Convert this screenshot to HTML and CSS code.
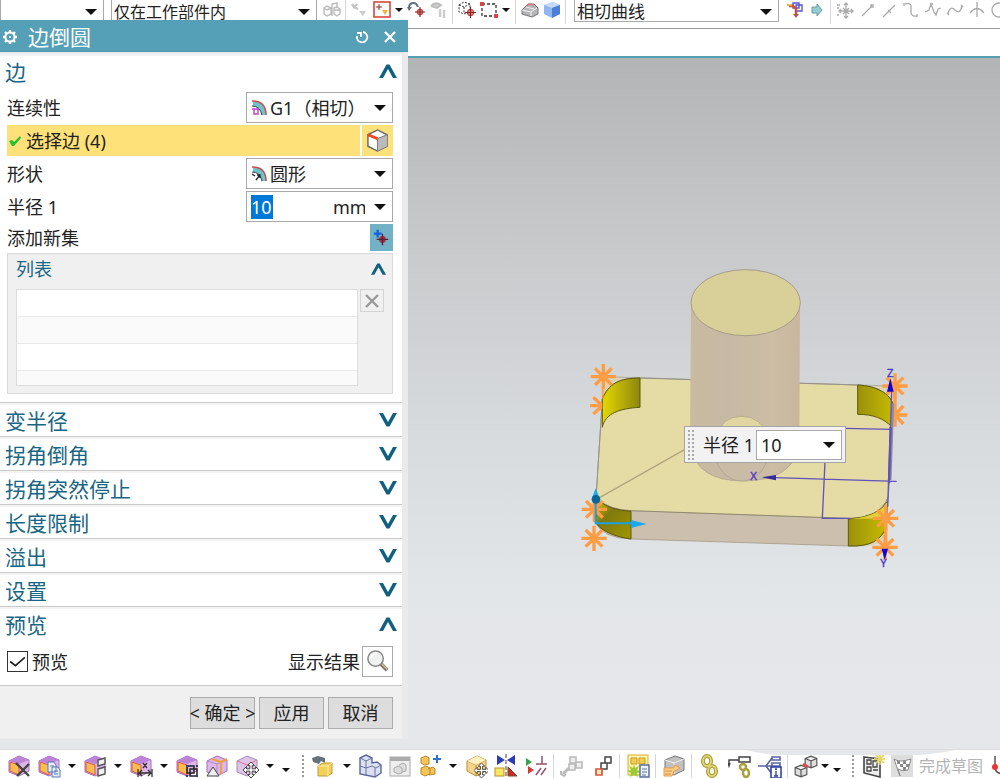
FILE: index.html
```html
<!DOCTYPE html>
<html lang="zh-CN">
<head>
<meta charset="utf-8">
<title>边倒圆</title>
<link rel="stylesheet" href="styles.css">
</head>
<body>
<svg class="defs" aria-hidden="true">
  <defs>
    <symbol id="down" viewBox="0 0 12 6"><path d="M0 0H12L6 6Z" fill="#111"/></symbol>
    <symbol id="chev" viewBox="0 0 18 14"><path d="M0 0H4L9 9L14 0H18L10.5 13.5H7.5Z" fill="#11607f"/></symbol>
    <symbol id="pcube" viewBox="0 0 24 24">
      <path d="M2 7L12 2L22 6V17L12 22L2 18Z" fill="#dcb6e8" stroke="#a66fc0"/>
      <path d="M2 7L12 2L22 6L12 10Z" fill="#bd83d8"/>
      <path d="M3 8L12 11V21L3 17Z" fill="#fbbd4d" stroke="#d9574e"/>
    </symbol>
    <symbol id="ycube" viewBox="0 0 24 24">
      <path d="M3 7L13 2L22 6V17L12 22L3 17Z" fill="#f4d489" stroke="#b98f34"/>
      <path d="M3 7L12 11L22 6M12 11V22" fill="none" stroke="#b98f34"/>
      <path d="M3 7L13 2L22 6L12 11Z" fill="#fff0bf"/>
    </symbol>
    <symbol id="move" viewBox="0 0 14 14"><path d="M7 0L10 3H8V6H11V4L14 7L11 10V8H8V11H10L7 14L4 11H6V8H3V10L0 7L3 4V6H6V3H4Z" fill="#fff" stroke="#333" stroke-width=".8"/></symbol>
    <symbol id="target" viewBox="0 0 12 12"><circle cx="6" cy="6" r="3.5" fill="#e88" stroke="#b22"/><path d="M6 0V12M0 6H12" stroke="#822" stroke-width="1.3"/></symbol>
    <symbol id="gcube" viewBox="0 0 12 12"><path d="M1 3L6 1L11 3V9L6 11L1 9ZM1 3L6 5L11 3M6 5V11" fill="#dedede" stroke="#555"/></symbol>
    <g id="star"><path d="M0-38V38M-38 0H38M-25-25L25 25M-25 25L25-25" stroke="#ff9d45" stroke-width="10"/></g>
    <linearGradient id="bright"><stop offset="0" stop-color="#e5d800"/><stop offset="1" stop-color="#8d850f"/></linearGradient>
    <linearGradient id="dark"><stop offset="0" stop-color="#9a910c"/><stop offset="1" stop-color="#c6bb00"/></linearGradient>
    <linearGradient id="low" x1="0" y1="0" x2="1" y2="1"><stop offset="0" stop-color="#d3c800"/><stop offset=".35" stop-color="#7f780f"/><stop offset="1" stop-color="#a19700"/></linearGradient>
    <linearGradient id="cyl"><stop offset="0" stop-color="#c9bba0"/><stop offset=".35" stop-color="#c6b8a4"/><stop offset=".75" stop-color="#cdbda5"/><stop offset="1" stop-color="#c8b79e"/></linearGradient>
  </defs>
</svg>

<div class="app">
  <header class="topbar">
    <span class="combo combo-first"><select aria-label="类型过滤器"><option></option></select><svg class="arrow"><use href="#down"/></svg></span>
    <span class="combo combo-scope"><select aria-label="选择范围"><option>仅在工作部件内</option></select><svg class="arrow"><use href="#down"/></svg></span>
    <svg class="tool" viewBox="0 0 20 20"><g fill="none" stroke="#bbb" stroke-width="1.4"><path d="M2 8L5 6L9 8V14L5 16L2 14ZM2 8L5 10L9 8M10 4V16M10 4L15 3V8M12 8L15 7L18 9V14L15 16L12 14ZM12 10H18"/></g></svg>
    <i class="sep"></i>
    <svg class="tool" viewBox="0 0 20 20"><path d="M2 4L4 7L7 4M4 7L8 9" fill="none" stroke="#c4c4c4" stroke-width="2.4"/><path d="M9 11H16L13 16Z" fill="#ccc"/></svg>
    <svg class="tool" viewBox="0 0 20 20"><rect x="2" y="2" width="16" height="15" fill="#fff" stroke="#d9453f" stroke-width="1.6"/><path d="M7 4V10M4 7H10" stroke="#555"/><circle cx="7" cy="7" r="1.5" fill="#c55"/><path d="M10 10H16L13 15Z" fill="#f3b43b"/></svg>
    <svg class="drop"><use href="#down"/></svg>
    <svg class="tool" viewBox="0 0 20 20"><path d="M2 8C2 2 9 1 11 7" fill="none" stroke="#666d80" stroke-width="2"/><path d="M0 7L5 7L2 11Z" fill="#666d80"/><use href="#target" x="8" y="7" width="10" height="10"/></svg>
    <svg class="tool" viewBox="0 0 20 20"><path d="M2 6Q6 1 12 5L8 8L2 6" fill="#ccc" stroke="#bdbdbd" stroke-width="2"/><path d="M11 9V17M15 10V18" stroke="#ccc" stroke-width="2.4"/></svg>
    <i class="sep"></i>
    <svg class="tool" viewBox="0 0 20 20"><path d="M2 5L7 2L13 4V11L7 14L2 12ZM2 5L7 7L13 4M7 7V13" fill="none" stroke="#333" stroke-dasharray="2 1.4"/><use href="#target" x="8" y="7" width="11" height="11"/></svg>
    <svg class="tool" viewBox="0 0 20 20"><rect x="3" y="4" width="14" height="12" fill="none" stroke="#333" stroke-width="1.3" stroke-dasharray="3 2"/><path d="M1 2H5V6H1ZM15 14H19V18H15Z" fill="#d44"/></svg>
    <svg class="drop"><use href="#down"/></svg>
    <i class="sep"></i>
    <svg class="tool" viewBox="0 0 20 20"><path d="M2 10L8 4H14L18 8V14L12 17L2 14Z" fill="#b5b5b7" stroke="#777"/><path d="M2 10L11 12L17 8M11 12V16M6 7L14 9" stroke="#f2f2f2" fill="none"/><path d="M7 6L9 4L14 5" stroke="#d77" fill="none" stroke-width="1.5"/></svg>
    <svg class="tool" viewBox="0 0 20 20"><path d="M2 5L11 2L18 5V14L10 18L2 14Z" fill="#8fb5f2"/><path d="M2 5L11 2L18 5L10 8Z" fill="#c5dafa"/><path d="M10 8L18 5V14L10 18Z" fill="#4e7fd6"/></svg>
    <i class="sep"></i>
    <span class="combo combo-curve"><select aria-label="曲线规则"><option>相切曲线</option></select><svg class="arrow"><use href="#down"/></svg></span>
    <svg class="tool" viewBox="0 0 20 20"><path d="M8 3H14V8H8ZM11 5H17V11H11Z" fill="none" stroke="#5156d3" stroke-width="1.4"/><path d="M4 6H8L11 9V15" fill="none" stroke="#d14c3b" stroke-width="2.4"/><path d="M2 5H7" stroke="#f0b544" stroke-width="2"/><path d="M8 14H14L11 18Z" fill="#a55"/></svg>
    <svg class="tool" viewBox="0 0 20 20"><path d="M5 7H10V4L15 10L10 16V13H5Z" fill="#96cdd5" stroke="#6e9aa5"/></svg>
    <i class="sep"></i>
    <svg class="tool gray" viewBox="0 0 20 20"><path d="M11 3V18M4 11H18M9 5L11 3L13 5M9 16L11 18L13 16M6 9L4 11L6 13M16 9L18 11L16 13M8 8L14 14M14 8L8 14"/><path d="M2 5H5M2 8H4M2 15H4"/></svg>
    <svg class="tool gray" viewBox="0 0 20 20"><path d="M5 16L15 6M14 5H16V7H14Z"/></svg>
    <svg class="tool gray" viewBox="0 0 20 20"><path d="M4 17L16 5M9 10L12 13"/></svg>
    <svg class="tool gray" viewBox="0 0 20 20"><path d="M4 4Q11 2 10 8V12Q10 17 16 16M3 3V6M16 14V17"/></svg>
    <svg class="tool gray" viewBox="0 0 20 20"><path d="M2 12L6 10L8 4L11 12L13 15L15 9L18 8M7 4H10M12 14H14"/></svg>
    <svg class="tool gray" viewBox="0 0 20 20"><path d="M3 14Q5 5 10 10T17 6M2 13L4 15M16 5L18 7"/></svg>
    <svg class="tool gray" viewBox="0 0 20 20"><path d="M10 2V17M3 13Q10 4 17 13"/></svg>
    <svg class="tool gray" viewBox="0 0 20 20"><circle cx="10" cy="10" r="7"/></svg>
  </header>
  <div class="strip"></div>

  <main class="canvas">
    <div class="scene">
      <svg class="model" viewBox="0 0 1050 960">
        <path d="M100 350L863 375L970 380V440L955 715L950 835Q920 866 835 858L183 837Q100 838 72 785L78 715L97 418Z" fill="#ddd3b5"/>
        <path d="M78 715Q120 750 183 752L835 775Q930 772 955 710L948 800Q930 862 835 858L183 837Q100 835 75 785Z" fill="#cdbfae" stroke="#9b9180" stroke-width="2"/>
        <path d="M97 418C115 370 150 354 210 354L863 375C920 378 960 400 970 435L955 710Q930 775 835 775L183 752Q120 750 78 715Z" fill="#e5dba5" stroke="#918970" stroke-width="3"/>
        <path d="M100 350L363 358M690 370L970 378M97 418L78 715" stroke="#999" stroke-width="2"/>
        <g stroke="#5d590e" stroke-width="3">
          <path d="M97 418C115 370 150 354 210 354V442C150 445 105 460 97 502Z" fill="url(#bright)"/>
          <path d="M863 375C920 378 960 400 970 435L965 500C940 475 910 463 863 463Z" fill="url(#dark)"/>
          <path d="M90 725Q120 750 183 754V837C130 830 90 810 75 785Z" fill="url(#low)"/>
          <path d="M835 777Q925 772 952 725L948 800Q930 862 835 858Z" fill="url(#dark)"/>
        </g>
        <path d="M835 777Q925 772 952 725L948 775Z" fill="#e4cf35"/>
        <path d="M363 130L360 560Q380 663 520 663Q665 663 688 560L690 130Z" fill="url(#cyl)"/>
        <path d="M363 560Q380 663 520 663Q665 663 688 560" fill="none" stroke="#aaa08e" stroke-width="2"/>
        <ellipse cx="515" cy="566" rx="82" ry="97" fill="#c9bba5" stroke="#a99e88" stroke-width="2"/>
        <path d="M438 530Q455 469 515 469T592 530Z" fill="#e1d5a1" stroke="#aaa080" stroke-width="2"/>
        <ellipse cx="527" cy="128" rx="164" ry="99" fill="#d9cf98" stroke="#a69d8b" stroke-width="3"/>
        <path d="M90 712L345 568" stroke="#b3a47d" stroke-width="4"/>
        <g>
          <use href="#star" x="100" y="350"/><path d="M60 437H97M70 412L94 434M70 462L94 440" stroke="#ff9d45" stroke-width="10"/><path d="M98 380V415" stroke="#ff9d45" stroke-width="5"/>
          <use href="#star" x="975" y="378"/><path d="M975 380V500M975 465H1012M975 465L1000 438M975 465L1000 492" stroke="#ff9d45" stroke-width="10"/>
          <use href="#star" x="73" y="748"/><use href="#star" x="72" y="835"/>
          <use href="#star" x="947" y="775"/><use href="#star" x="945" y="862"/><path d="M947 775V862" stroke="#ff9d45" stroke-width="10"/>
        </g>
        <path d="M968 430L960 660" stroke="#8f8aa0" stroke-width="9"/>
        <g fill="none" stroke="#6253ba" stroke-width="4">
          <path d="M825 505L965 508M765 605L757 775H840M590 652L980 664M965 395L953 740"/>
          <path d="M962 500L957 670" stroke-width="7"/>
        </g>
        <path d="M575 652L618 645V661Z" fill="#352c99"/>
        <path d="M961 355L971 395H951ZM944 900L935 866H954Z" fill="#1200d8"/>
        <g class="axis"><text x="541" y="661">X</text><text x="951" y="350">Z</text><text x="931" y="920">Y</text></g>
        <path d="M77 710V790H190" fill="none" stroke="#1aa0e0" stroke-width="6"/>
        <path d="M77 685L90 718H65ZM230 792L183 780V804Z" fill="#1aa8ee"/><circle cx="78" cy="718" r="13" fill="#08669b"/>
      </svg>
      <div class="floatbox">
        <i class="grip"></i>
        <label for="float-radius">半径 1</label>
        <span class="combo combo-float"><select id="float-radius"><option>10</option></select><svg class="arrow"><use href="#down"/></svg></span>
      </div>
    </div>
  </main>

  <footer class="bottombar">
    <svg class="ic" viewBox="0 0 24 24"><use href="#pcube"/><path d="M9 9L22 22M22 10L10 22" stroke="#444" stroke-width="2.4"/></svg>
    <svg class="ic" viewBox="0 0 24 24"><use href="#pcube"/><path d="M11 8H17L19 11V18H11ZM15 13H21L23 16V23H15Z" fill="#e8effc" stroke="#587bb8"/><path d="M13 12H17M17 17H21M17 20H21" stroke="#587bb8"/></svg>
    <svg class="drop"><use href="#down"/></svg>
    <svg class="ic" viewBox="0 0 24 24"><use href="#pcube"/><path d="M15 6L22 4V10L15 12ZM15 15L22 13V20L15 22Z" fill="#f1f1f1" stroke="#555" stroke-width="1.4"/></svg>
    <svg class="drop"><use href="#down"/></svg>
    <svg class="ic" viewBox="0 0 24 24"><use href="#pcube"/><path d="M9 15V23M23 15V23M10 19H22M13 16L10 19L13 22M19 16L22 19L19 22M14 9L18 14M18 9L14 14" stroke="#333" fill="none" stroke-width="1.3"/></svg>
    <svg class="drop"><use href="#down"/></svg>
    <svg class="ic" viewBox="0 0 24 24"><use href="#pcube"/><path d="M12 12H19V19H12ZM15 15H22V22H15Z" fill="none" stroke="#222" stroke-width="1.5"/><path d="M11 11H13V13H11ZM21 11H23V13H21ZM11 21H13V23H11ZM21 21H23V23H21Z" fill="#2d38a8"/></svg>
    <svg class="ic" viewBox="0 0 24 24"><path d="M2 7L12 2L22 6V17L12 22L2 18Z" fill="#dcb6e8" stroke="#a66fc0"/><path d="M2 7L12 10V20M12 10L22 6" fill="none" stroke="#b98acb"/><path d="M7 5L16 8V20M16 8L22 5" fill="none" stroke="#efa03d" stroke-width="2"/><path d="M2 22L8 13L14 22Z" fill="#eee" stroke="#444"/></svg>
    <svg class="ic" viewBox="0 0 24 24"><path d="M2 7L12 2L22 6V17L12 22L2 18Z" fill="#ddc3e5" stroke="#a98bb5"/><path d="M2 7L12 11L22 6" fill="none" stroke="#db7893"/><use href="#move" x="8" y="8" width="16" height="16"/></svg>
    <svg class="drop"><use href="#down"/></svg>
    <svg class="drop drop-low"><use href="#down"/></svg>
    <i class="dots"></i>
    <svg class="ic" viewBox="0 0 24 24"><path d="M0 4L6 2L13 4V9L9 7L7 10L1 8Z" fill="#65717d"/><path d="M6 12L11 9H20V19L16 22H6Z" fill="#f2d158" stroke="#c39b36"/><path d="M6 12H16L20 9M16 12V22" fill="none" stroke="#fff0a5"/></svg>
    <svg class="drop"><use href="#down"/></svg>
    <svg class="ic" viewBox="0 0 24 24"><path d="M2 4L8 1L14 4V9L19 8L23 11V19L17 23L2 20Z" fill="#dce1f1" stroke="#5966a0" stroke-width="1.4"/><path d="M2 4L8 7L14 4M8 7V21M2 12L8 14L14 12L18 14L23 11M17 14V22" fill="none" stroke="#68739f"/></svg>
    <svg class="ic" viewBox="0 0 24 24"><rect x="2" y="3" width="20" height="19" fill="#eee" stroke="#aaa"/><path d="M2 5H22" stroke="#aaa" stroke-width="4"/><path d="M6 14L10 12L14 14V19L10 20L6 18ZM11 11L15 9L18 11V17L14 18" fill="#ddd" stroke="#aaa"/></svg>
    <svg class="ic" viewBox="0 0 24 24"><path d="M3 4L8 2L11 4V10L6 11L3 9ZM3 14L8 12L12 14V20L7 22L3 20ZM10 15L15 13L17 15V20L11 21" fill="#f5c458" stroke="#b9882f"/><path d="M19 1V9M15 5H23" stroke="#2f72d5" stroke-width="2"/></svg>
    <svg class="drop"><use href="#down"/></svg>
    <svg class="ic" viewBox="0 0 24 24"><use href="#ycube"/><use href="#move" x="10" y="9" width="15" height="15"/></svg>
    <svg class="ic" viewBox="0 0 24 24"><path d="M3 1L11 6L3 11ZM21 1L13 6L21 11Z" fill="#2d3cb6"/><path d="M12 0V24" stroke="#444" stroke-dasharray="4 2"/><rect x="1" y="14" width="9" height="8" fill="#f8e663" stroke="#b99124"/><path d="M14 13L23 22H14Z" fill="#c92b2b" stroke="#842"/></svg>
    <svg class="ic" viewBox="0 0 24 24"><path d="M2 4L8 8L2 12Z" fill="#37a254"/><path d="M4 12L10 16L4 20Z" fill="#d63d30"/><path d="M18 2V10M12 10H23M12 21L17 14M17 21L22 14" stroke="#96506f" stroke-width="1.5"/></svg>
    <i class="sep"></i>
    <svg class="ic" viewBox="0 0 24 24"><path d="M10 3H16V9H10ZM16 8H22V14H16ZM9 10H15V16H9Z" fill="#eee" stroke="#bbb" stroke-width="1.6"/><path d="M3 20L9 14" stroke="#bbb" stroke-width="3"/><path d="M1 17L1 20L4 22L6 20" fill="none" stroke="#bbb" stroke-width="2"/></svg>
    <svg class="ic" viewBox="0 0 24 24"><path d="M15 3H21V9H15ZM11 9H17V15H11Z" fill="#fff" stroke="#444" stroke-width="1.5"/><path d="M6 15H12V21H6Z" fill="#ffe5bd" stroke="#d4583a" stroke-width="1.7"/></svg>
    <i class="sep"></i>
    <svg class="ic" viewBox="0 0 24 24"><rect x="2" y="1" width="20" height="20" fill="#fff4b1" stroke="#d4b02d"/><path d="M5 4H11V10H5ZM13 4H19V10H13Z" fill="#f4cd50" stroke="#c59b22"/><path d="M8 10L9 14L13 12L11 16L15 18L11 19L12 23L8 21L4 23L5 19L1 17L5 16L3 12L7 14Z" fill="#9acb34"/><path d="M14 11H23V23H14Z" fill="#eef3ff" stroke="#5670a2" stroke-width="1.5"/><path d="M16 15H21M16 18H21M16 21H20" stroke="#5670a2"/></svg>
    <i class="sep"></i>
    <svg class="ic" viewBox="0 0 24 24"><path d="M3 6L13 2L22 5V16L12 21L3 17Z" fill="#c1c1c1" stroke="#777"/><path d="M3 6L12 9L22 5M12 9V20" stroke="#eee" fill="none"/><path d="M2 14H12V11L17 13V15L12 17L10 22H2Z" fill="#ffd18a" stroke="#e59a46"/><path d="M3 17H10M3 20H9" stroke="#d98e3d"/></svg>
    <i class="sep"></i>
    <svg class="ic" viewBox="0 0 24 24"><g fill="none" stroke="#a79b31" stroke-width="4"><ellipse cx="9" cy="7" rx="4" ry="5"/><ellipse cx="14" cy="17" rx="4" ry="5"/></g><g fill="none" stroke="#dfd276" stroke-width="2"><ellipse cx="9" cy="7" rx="4" ry="5"/><ellipse cx="14" cy="17" rx="4" ry="5"/></g></svg>
    <svg class="ic" viewBox="0 0 24 24"><path d="M1 11V6H11M2 9L1 12L0 9M11 3H22V8H11Z" fill="none" stroke="#444" stroke-width="1.5"/><g fill="none" stroke="#aa9f3d" stroke-width="2.4"><ellipse cx="15" cy="13" rx="3" ry="3"/><ellipse cx="18" cy="19" rx="3" ry="4"/></g></svg>
    <svg class="ic" viewBox="0 0 24 24"><path d="M0 12H8M8 12L14 4M8 12L14 20M8 12H14M14 3H22V6H14ZM14 9H22V12H14Z" fill="none" stroke="#5965a0" stroke-width="1.6"/><rect x="13" y="13" width="10" height="11" fill="#fff" stroke="#2839a7" stroke-width="1.5"/><path d="M18 17V22M16 22H20M17 15H19" stroke="#2839a7" stroke-width="1.3"/></svg>
    <i class="sep"></i>
    <div class="tail">
      <svg class="ic" viewBox="0 0 24 24"><use href="#gcube" x="0" y="10" width="14" height="14"/><use href="#gcube" x="10" y="1" width="14" height="14"/><path d="M9 10L14 13" stroke="#d44f4f" stroke-width="3"/></svg>
      <svg class="drop"><use href="#down"/></svg>
      <svg class="drop drop-low"><use href="#down"/></svg>
      <i class="dots"></i>
      <svg class="ic" viewBox="0 0 24 24"><path d="M3 3L19 5V23L3 19Z" fill="#eee" stroke="#444" stroke-width="1.6"/><path d="M6 6H10V10H6ZM12 7H16V13H12ZM6 13H10V17H6ZM12 16H17" fill="none" stroke="#444" stroke-width="1.3"/><path d="M19 0V11M13 5H24M15 1L23 9M23 1L15 9" stroke="#e7d85b" stroke-width="1.6"/></svg>
      <button class="sketch" type="button">
        <svg class="ic" viewBox="0 0 24 24"><path d="M1 1H23V23H1Z" fill="#ddd"/><path d="M4 5Q9 9 21 5L18 16Q12 18 8 15L10 22M4 5L10 22" fill="#fff" stroke="#888"/><path d="M7 7H10V10H7ZM13 7H16V10H13ZM10 10H13V13H10ZM16 10H19V13H16ZM13 13H16V16H13Z" fill="#888"/></svg>
        完成草图
      </button>
      <svg class="ic" viewBox="0 0 24 24"><path d="M10 2V13Q10 20 20 20" fill="none" stroke="#555" stroke-width="1.5"/><circle cx="10" cy="13" r="3" fill="#e33"/></svg>
    </div>
    <i class="haze"></i>
  </footer>

  <section class="dialog" aria-label="边倒圆">
    <div class="titlebar">
      <svg class="gear" viewBox="0 0 16 16"><circle cx="8" cy="8" r="4.6" fill="none" stroke="#fff" stroke-width="2"/><circle cx="8" cy="8" r="1" fill="#fff"/><path d="M8 1V3M8 13V15M1 8H3M13 8H15M3 3L4.5 4.5M11.5 11.5L13 13M13 3L11.5 4.5M3 13L4.5 11.5" stroke="#fff" stroke-width="2.4"/></svg>
      <h1>边倒圆</h1>
      <button type="button" aria-label="重置"><svg viewBox="0 0 14 14"><path d="M8 2A5.2 5.2 0 1 1 2 6M2 3H6V7" fill="none" stroke="#fff" stroke-width="1.8"/></svg></button>
      <button type="button" aria-label="关闭"><svg viewBox="0 0 14 14"><path d="M2 2L12 12M12 2L2 12" stroke="#fff" stroke-width="2.4"/></svg></button>
    </div>

    <div class="body">
      <section class="group edge">
        <button class="head" type="button">边<svg class="chev up"><use href="#chev"/></svg></button>
        <div class="rows">
          <div class="row"><label for="cont">连续性</label>
            <span class="combo field"><select id="cont" class="with-icon"><option>G1（相切）</option></select>
              <svg class="lead" viewBox="0 0 16 16"><path d="M2 4Q12 4 13 15" fill="none" stroke="#6cc5cc" stroke-width="5"/><path d="M1 1Q15 1 15 15" fill="none" stroke="#c94a4a" stroke-width="1.5"/><path d="M1 6Q9 6 11 15" fill="none" stroke="#444" stroke-width="1"/><path d="M1 9H8M3 9V14H7V9" fill="none" stroke="#c43dcc" stroke-width="1.4"/></svg>
              <svg class="arrow"><use href="#down"/></svg></span></div>
          <div class="row pick"><div class="picked"><svg viewBox="0 0 14 14"><path d="M1 7L4 6L6 8L12 2L13 4L6 12H4Z" fill="#2bc034"/></svg>选择边 (4)</div>
            <button type="button" aria-label="选择边"><svg viewBox="0 0 24 24"><path d="M2 6L12 1L22 6V18L12 23L2 18Z" fill="#fff" stroke="#666" stroke-width="1.5"/><path d="M12 10L22 6V18L12 23Z" fill="#bbb"/><path d="M12 10V23M12 10L22 6" stroke="#777"/><path d="M2 6L12 10" stroke="#f04822" stroke-width="3"/></svg></button></div>
          <div class="row"><label for="shape">形状</label>
            <span class="combo field"><select id="shape" class="with-icon"><option>圆形</option></select>
              <svg class="lead" viewBox="0 0 16 16"><path d="M2 4Q12 4 13 15" fill="none" stroke="#6cc5cc" stroke-width="5"/><path d="M1 1Q15 1 15 15" fill="none" stroke="#c94a4a" stroke-width="1.5"/><path d="M1 6Q9 6 11 15" fill="none" stroke="#444" stroke-width="1"/><path d="M1 8L4 10M5 14L9 9M6 9H9V12" fill="none" stroke="#222" stroke-width="1.3"/></svg>
              <svg class="arrow"><use href="#down"/></svg></span></div>
          <div class="row"><label for="radius">半径 1</label>
            <span class="field measure"><input id="radius" type="text" value="10"><span class="combo unit"><select aria-label="单位"><option>mm</option></select><svg class="arrow"><use href="#down"/></svg></span></span></div>
          <div class="row add"><span>添加新集</span><button type="button" aria-label="添加新集"><svg viewBox="0 0 24 24"><path d="M8 4V12M4 8H12" stroke="#1260e0" stroke-width="2.4"/><circle cx="13" cy="14" r="3.5" fill="#a92d3f"/><path d="M13 8V20M7 14H19" stroke="#5c1d35" stroke-width="1.4"/></svg></button></div>
        </div>
        <div class="listbox">
          <button class="subhead" type="button">列表<svg class="chev up small"><use href="#chev"/></svg></button>
          <div class="listrow"><div class="list"><i></i><i></i><i></i><i></i></div>
            <button type="button" aria-label="移除"><svg viewBox="0 0 16 16"><path d="M2 2L14 14M14 2L2 14" stroke="#999" stroke-width="2.4"/></svg></button></div>
        </div>
      </section>
      <section class="group"><button class="head" type="button">变半径<svg class="chev"><use href="#chev"/></svg></button></section>
      <section class="group"><button class="head" type="button">拐角倒角<svg class="chev"><use href="#chev"/></svg></button></section>
      <section class="group"><button class="head" type="button">拐角突然停止<svg class="chev"><use href="#chev"/></svg></button></section>
      <section class="group"><button class="head" type="button">长度限制<svg class="chev"><use href="#chev"/></svg></button></section>
      <section class="group"><button class="head" type="button">溢出<svg class="chev"><use href="#chev"/></svg></button></section>
      <section class="group"><button class="head" type="button">设置<svg class="chev"><use href="#chev"/></svg></button></section>
      <section class="group preview">
        <button class="head" type="button">预览<svg class="chev up"><use href="#chev"/></svg></button>
        <div class="previewrow">
          <span class="check"><input id="pv" type="checkbox" checked><svg viewBox="0 0 20 20"><path d="M3 10L8 14L17 6" fill="none" stroke="#222" stroke-width="1.6"/></svg></span>
          <label for="pv">预览</label>
          <label class="result" for="show">显示结果</label>
          <button id="show" type="button"><svg viewBox="0 0 26 26"><path d="M16 15L23 22" stroke="#777" stroke-width="4"/><path d="M17 15L23 21" stroke="#cfc68e" stroke-width="1.6"/><circle cx="11" cy="10" r="8" fill="#f0f1f1" stroke="#888" stroke-width="1.6"/><path d="M6 10Q7 5 12 5" fill="none" stroke="#fff" stroke-width="2"/></svg></button>
        </div>
      </section>
      <div class="actions"><button type="button">&lt; 确定 &gt;</button><button type="button">应用</button><button type="button">取消</button></div>
    </div>
  </section>
</div>
</body>
</html>
```
FILE: styles.css
```css
* { box-sizing: border-box; }

body {
  margin: 0;
  color: #222;
  font: 18px/24px "Noto Sans", "Noto Sans CJK SC", sans-serif;
}

.defs { position: absolute; width: 0; height: 0; }

button, input, select { margin: 0; padding: 0; border: 0; border-radius: 0; background: none; color: inherit; font: inherit; }
svg { display: block; flex: none; }
h1 { margin: 0; font-weight: 400; }

.app { position: relative; display: flex; flex-direction: column; height: 100vh; overflow: hidden; background: #fff; }

/* drop-downs */
.combo { display: grid; align-items: center; background: #fff; border: 1px solid #a9a9a9; }
.combo > * { grid-area: 1 / 1; }
.combo select { width: 100%; height: 100%; appearance: none; outline: 0; }
.arrow { width: 12px; height: 6px; margin-right: 6px; justify-self: end; pointer-events: none; }
.drop { width: 8px; height: 4px; margin: 0 1px; }

/* selection bar */
.topbar { display: flex; gap: 2px; height: 29px; padding-bottom: 6px; border-bottom: 1px solid #999; overflow: hidden; }
.topbar > * { flex: none; }
.topbar .combo { border-top: 0; font-size: 16px; }
.combo-first { width: 104px; }
.combo-scope { width: 206px; margin: 0 3px 0 5px; }
.topbar .combo-curve { width: 205px; margin: 0 4px; font-size: 17px; }
.combo-scope select, .combo-curve select { padding-left: 2px; }
.tool { width: 20px; height: 20px; }
.topbar .drop { margin: 8px 2px 0 1px; }
.gray { fill: none; stroke: #aaa; stroke-width: 1.3px; }
.sep { flex: none; width: 2px; height: 24px; border-left: 1px solid #d5d5d5; }
.topbar .sep { margin: 0 1px; }

.strip { flex: none; height: 29px; border-bottom: 2px solid #559fb2; }

/* graphics window */
.canvas { position: relative; flex: 1; background: linear-gradient(#b2b4b6, #c8cacc 28%, #d8dbdd 55%, #e3e6e8 78%, #e6e7ea); }
.scene { position: absolute; left: 57%; top: 202px; width: 350px; height: 320px; }
.model { width: 100%; height: 100%; }
.axis { fill: #4a38c6; stroke: #4a38c6; stroke-width: 1px; font-size: 34px; }
.floatbox { position: absolute; left: 114px; top: 166px; display: flex; align-items: center; width: 162px; height: 37px; padding: 3px; background: #f2f2f2; border: 1px solid #a5a5a5; }
.grip { width: 6px; height: 30px; margin-right: 9px; background: radial-gradient(circle at 1px 1px, #aaa 1px, transparent 1px) 0 0 / 4px 4px; }
.floatbox label { flex: none; }
.combo-float { flex: 1; height: 30px; margin-left: 2px; }
.combo-float select { padding-left: 4px; }

/* assembly bar */
.bottombar { position: relative; flex: none; display: flex; align-items: center; gap: 6px; height: 30px; padding: 3px 0 0 7px; overflow: hidden; background: #fff; border-top: 1px solid #ddd; }
.ic { width: 24px; height: 24px; }
.bottombar .sep { margin: 0 -1px; }
.bottombar .drop-low { margin-top: 8px; }
.dots { flex: none; width: 6px; height: 24px; margin-left: 3px; background: radial-gradient(circle at 3px 2px, #999 1px, transparent 1px) 0 0 / 6px 4px; }
.tail { display: flex; flex: none; align-items: center; gap: 2px; }
.tail .dots { margin: 0 3px 0 6px; }
.sketch { display: flex; align-items: center; gap: 5px; margin-left: 3px; color: #b5b5b5; font-size: 16px; white-space: nowrap; }
.haze { position: absolute; left: 74%; right: 4%; top: -1px; height: 6px; background: #e6e7ea; clip-path: polygon(0 0, 100% 0, 92% 60%, 82% 100%, 16% 100%, 8% 60%); }

/* dialog */
.dialog { position: absolute; left: 0; top: 20px; width: 408px; background: #eaeaed; }
.titlebar { display: flex; align-items: center; height: 32px; padding: 2px 9px 0 2px; background: #55a0b6; color: #fff; border-bottom: 1px solid #4b98ae; }
.titlebar h1 { flex: 1; padding-left: 10px; font-size: 21px; line-height: 28px; }
.gear { width: 16px; height: 16px; }
.titlebar button { width: 18px; height: 18px; margin-left: 10px; padding: 2px; }

.body { padding: 2px 6px 1px 0; }
.group { background: #fff; border-bottom: 1px solid #c9c9c9; box-shadow: inset 0 2px #f4f4f4; }
.head { display: flex; justify-content: space-between; align-items: center; width: 100%; height: 33px; padding: 3px 5px 0; color: #196684; font-size: 21px; line-height: 28px; }
.chev { width: 18px; height: 14px; margin-bottom: 2px; }
.up { transform: scaleY(-1); }
.edge { padding-bottom: 8px; }
.edge > .head { height: 36px; padding-top: 0; }

.rows { display: flex; flex-direction: column; gap: 2px; padding: 2px 9px 0 7px; }
.row { display: flex; justify-content: space-between; align-items: center; height: 31px; }
.field { width: 147px; height: 31px; }
.with-icon { padding-left: 23px; }
.lead { width: 16px; height: 16px; margin-left: 4px; pointer-events: none; }
.pick { gap: 2px; }
.picked { display: flex; flex: 1; align-items: center; gap: 4px; height: 31px; padding-left: 1px; background: #ffe179; }
.picked svg { width: 14px; height: 14px; }
.pick button { width: 31px; height: 31px; padding: 4px; background: #ffe179; }
.measure { display: flex; align-items: center; padding-left: 4px; background: #fff; border: 1px solid #a9a9a9; }
.measure input { width: 22px; height: 24px; background: #0078d7; color: #fff; }
.unit { width: 59px; height: 28px; margin-left: auto; border: 0; }
.unit select { padding-right: 27px; }
.add { height: 27px; }
.add button { width: 23px; height: 27px; background: #72b2c6; }

.listbox { margin: 2px 9px 0 7px; padding: 0 8px 7px; background: #f0f0f0; border: 1px solid #d9d9d9; }
.subhead { display: flex; justify-content: space-between; align-items: center; width: 100%; height: 35px; padding: 0 0 6px; color: #196684; }
.small { width: 15px; height: 12px; margin-bottom: 0; }
.subhead .small { margin-right: -2px; }
.listrow { display: flex; align-items: flex-start; gap: 2px; }
.list { display: grid; flex: 1; grid-template-rows: 27px 27px 27px 1fr; height: 97px; background: #fff; border: 1px solid #ddd; }
.list i { border-bottom: 1px solid #e9e9e9; }
.list i:nth-child(even) { background: #fafafa; }
.list i:last-child { border: 0; }
.listrow button { width: 24px; height: 23px; padding: 3px; border: 1px solid #d4d4d4; }

.preview { padding-bottom: 5px; }
.previewrow { display: flex; align-items: center; height: 40px; padding: 3px 9px 0 7px; }
.check { display: grid; width: 21px; height: 21px; margin-right: 4px; }
.check > * { grid-area: 1 / 1; width: 21px; height: 21px; }
.check input { appearance: none; border: 1px solid #333; }
.check svg { pointer-events: none; }
.result { margin-left: auto; }
.previewrow button { width: 31px; height: 31px; margin-left: 2px; padding: 2px; border: 1px solid #aaa; }
.actions { display: flex; justify-content: flex-end; gap: 4px; padding: 11px 9px 9px; background: #f0f0f0; }
.actions button { display: flex; align-items: center; justify-content: center; width: 65px; height: 32px; background: #ddd; border: 1px solid #acacac; white-space: nowrap; }
```
